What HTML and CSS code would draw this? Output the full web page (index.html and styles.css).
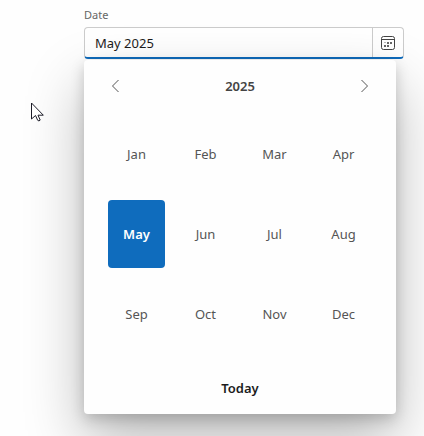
FILE: index.html
```html
<!DOCTYPE html>
<html lang="en">
<head>
  <meta charset="UTF-8">
  <meta name="viewport" content="width=device-width, initial-scale=1.0">
  <title>Month Picker</title>
  <link rel="stylesheet" href="styles.css">
</head>
<body>
  <div class="date-picker">
    <label class="date-label" for="date">Date</label>
    <div class="date-field">
      <input type="text" id="date" class="date-input" value="May 2025">
      <button type="button" class="calendar-button" aria-label="Open calendar">
        <svg width="16" height="16" viewBox="0 0 16 16" fill="none" stroke="#444">
          <rect x="1.5" y="1.5" width="13" height="13" rx="2"/>
          <path d="M1.5 4.500h13"/>
          <path d="M7 8h2M10 8h2M4 11h2M7 11h2" stroke="#666" stroke-width="2"/>
          <path d="M4 7.500h2" stroke="#bbb"/>
        </svg>
      </button>
    </div>

    <div class="calendar">
      <div class="calendar-header">
        <button type="button" class="nav-button" aria-label="Previous year">
          <svg width="14" height="14" viewBox="0 0 14 14" fill="none" stroke="#555"><path d="M10.500 1l-6 6 6 6"/></svg>
        </button>
        <span class="year">2025</span>
        <button type="button" class="nav-button" aria-label="Next year">
          <svg width="14" height="14" viewBox="0 0 14 14" fill="none" stroke="#555"><path d="M3.500 1l6 6-6 6"/></svg>
        </button>
      </div>

      <div class="months">
        <button type="button" class="month">Jan</button>
        <button type="button" class="month">Feb</button>
        <button type="button" class="month">Mar</button>
        <button type="button" class="month">Apr</button>
        <button type="button" class="month selected">May</button>
        <button type="button" class="month">Jun</button>
        <button type="button" class="month">Jul</button>
        <button type="button" class="month">Aug</button>
        <button type="button" class="month">Sep</button>
        <button type="button" class="month">Oct</button>
        <button type="button" class="month">Nov</button>
        <button type="button" class="month">Dec</button>
      </div>

      <button type="button" class="today">Today</button>
    </div>
  </div>

  <svg class="cursor" width="14" height="22" viewBox="0 0 14 22" fill="#fff" stroke="#1c1c28">
    <path d="M.5 1v16l4-3.500 2.200 4.800q1.300 1.400 2.500-.2l-2.200-4.900H12.300z"/>
  </svg>
</body>
</html>
```

FILE: styles.css
```css
body {
  box-sizing: border-box;
  min-height: 100vh;
  margin: 0;
  padding: 8px 20px 20px 84px;
  font-family: "Segoe UI", "Noto Sans", sans-serif;
  font-size: 13px;
  color: #444;
  background-color: #fefefe;
}
button {
  padding: 0;
  border: none;
  background: none;
  font: inherit;
  color: inherit;
  cursor: pointer;
}
svg {
  display: block;
}
.date-label {
  display: block;
  height: 19px;
  font-size: 11px;
  line-height: 14px;
  color: #666;
}
.date-field {
  display: flex;
  box-sizing: border-box;
  height: 32px;
  border: 1px solid #ccc;
  border-bottom: 2px solid #0f6cbd;
  border-radius: 4px;
  background-color: #fff;
}
.date-input {
  flex: 1;
  min-width: 0;
  padding: 0 10px;
  border: none;
  outline: none;
  background: none;
  font: inherit;
  color: #1c1c1c;
}
.calendar-button {
  display: flex;
  align-items: center;
  justify-content: center;
  width: 31px;
  border-left: 1px solid #ccc;
}
.calendar {
  position: relative;
  margin: 1px 8px 0 0;
  padding: 14px 24px;
  border-radius: 4px;
  background-color: #fefefe;
  box-shadow: 0 26px 58px rgba(0, 0, 0, 0.28), 0 5px 14px rgba(0, 0, 0, 0.18);
}
.calendar-header {
  display: flex;
  align-items: center;
  justify-content: space-between;
  height: 24px;
}
.nav-button {
  display: flex;
}
.year {
  font-weight: 600;
}
.months {
  display: grid;
  grid-template-columns: repeat(4, 1fr);
  gap: 12px;
  margin: 22px 0 28px;
}
.month {
  height: 68px;
  border-radius: 4px;
  color: #555;
}
.month.selected {
  background-color: #0f6cbd;
  color: #fff;
  font-weight: 600;
}
.today {
  display: block;
  width: 100%;
  height: 24px;
  font-weight: 600;
  color: #1c1c1c;
}
.cursor {
  position: absolute;
  top: 102px;
  left: 31px;
}
```
